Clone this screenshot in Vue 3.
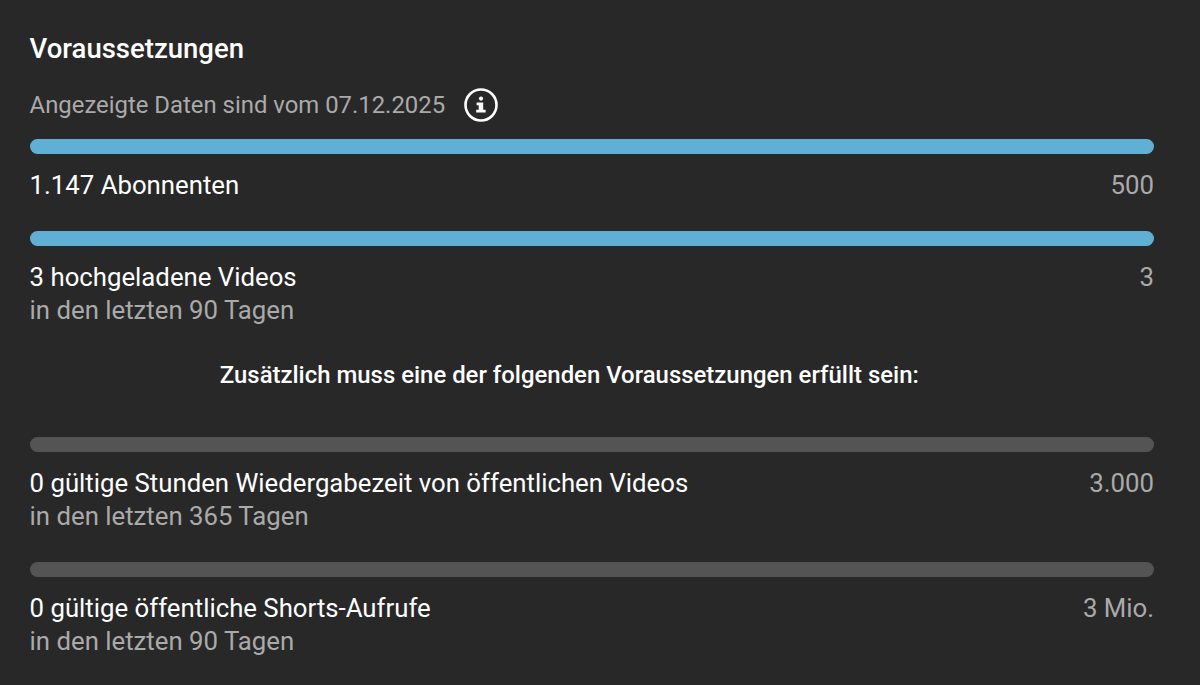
<template>
  <div class="panel">
    <h2 class="title">Voraussetzungen</h2>
    <div class="date-row">
      <span class="muted">Angezeigte Daten sind vom 07.12.2025</span>
      <svg class="info" width="34" height="34" viewBox="0 0 34 34">
        <circle cx="17" cy="17" r="15.5" fill="none" stroke="#fff" stroke-width="2.6" />
        <circle cx="17" cy="10.6" r="2.1" fill="#fff" />
        <path d="M12.6 14.6h6.6v7.2h2.4v2.6h-9.4v-2.6h2.5v-4.6h-2.1z" fill="#fff" />
      </svg>
    </div>

    <div v-for="row in firstRows" :key="row.label" class="req">
      <div class="bar" :class="{ filled: row.done }"></div>
      <div class="req-head">
        <span>{{ row.label }}</span>
        <span class="muted">{{ row.goal }}</span>
      </div>
      <div v-if="row.sub" class="muted sub">{{ row.sub }}</div>
    </div>

    <p class="extra">Zusätzlich muss eine der folgenden Voraussetzungen erfüllt sein:</p>

    <div v-for="row in otherRows" :key="row.label" class="req">
      <div class="bar" :class="{ filled: row.done }"></div>
      <div class="req-head">
        <span>{{ row.label }}</span>
        <span class="muted">{{ row.goal }}</span>
      </div>
      <div v-if="row.sub" class="muted sub">{{ row.sub }}</div>
    </div>
  </div>
</template>

<script setup>
const firstRows = [
  { label: '1.147 Abonnenten', goal: '500', done: true },
  { label: '3 hochgeladene Videos', goal: '3', sub: 'in den letzten 90 Tagen', done: true },
];

const otherRows = [
  { label: '0 gültige Stunden Wiedergabezeit von öffentlichen Videos', goal: '3.000', sub: 'in den letzten 365 Tagen', done: false },
  { label: '0 gültige öffentliche Shorts-Aufrufe', goal: '3 Mio.', sub: 'in den letzten 90 Tagen', done: false },
];
</script>

<style>
html,
body {
  margin: 0;
  background: #282828;
}
</style>

<style scoped>
.panel {
  box-sizing: border-box;
  width: 1200px;
  height: 685px;
  padding: 30px 46px 0 29.6px;
  overflow: hidden;
  background: #282828;
  color: #fff;
  font-family: Roboto, "Liberation Sans", sans-serif;
  font-size: 25.75px;
  line-height: 33px;
}

.title {
  margin: 0;
  font-size: 27.5px;
  font-weight: 500;
  line-height: 38px;
}

.date-row {
  display: flex;
  align-items: center;
  gap: 19px;
  height: 34px;
  margin-top: 20px;
}

.muted {
  color: #aaa;
}

.date-row .muted {
  font-size: 23.88px;
}

.info {
  flex: none;
}

.req {
  margin-bottom: 29px;
}

.date-row + .req {
  margin-top: 17px;
}

.bar {
  height: 15px;
  border-radius: 8px;
  background: #545454;
}

.bar.filled {
  background: #60b0d6;
}

.req-head {
  display: flex;
  justify-content: space-between;
  margin-top: 15px;
}

.extra {
  margin: 32px 0 45px;
  padding-right: 45px;
  font-size: 23.93px;
  font-weight: 500;
  text-align: center;
}
</style>
